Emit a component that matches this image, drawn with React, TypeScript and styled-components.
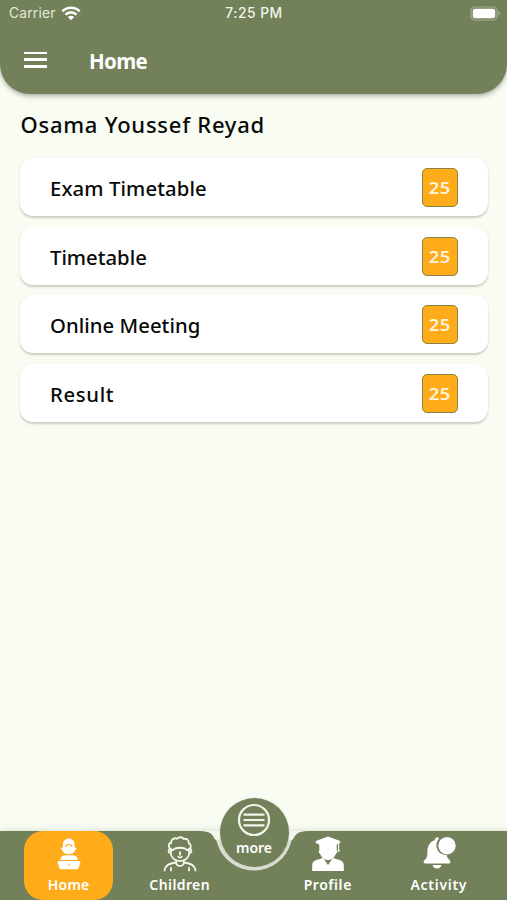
import React from "react";
import styled, { createGlobalStyle } from "styled-components";

const GREEN = "#728159";
const ORANGE = "#ffab1a";
const PAGE = "#f9fcf2";

const GlobalStyle = createGlobalStyle`
  * { box-sizing: border-box; }
  body { margin: 0; background: ${PAGE}; }
`;

const Screen = styled.div`
  width: 507px;
  height: 900px;
  display: flex;
  flex-direction: column;
  overflow: hidden;
  background: ${PAGE};
  font-family: "Noto Sans", "Open Sans", sans-serif;
`;

const Header = styled.header`
  height: 94px;
  flex: none;
  background: ${GREEN};
  border-radius: 0 0 30px 30px;
  box-shadow: 0 2px 5px rgba(60, 70, 50, 0.42);
  color: #fff;
`;

const StatusBar = styled.div`
  height: 27px;
  display: grid;
  grid-template-columns: 1fr auto 1fr;
  align-items: center;
  padding: 0 7px 0 9px;
  font: 400 13.8px/27px Inter, sans-serif;
  color: #f1f4ec;
`;

const Carrier = styled.div`
  display: flex;
  align-items: center;
  gap: 5px;
  letter-spacing: 0.2px;
  color: #e4e9dc;
`;

const Clock = styled.div`
  font-weight: 500;
  font-size: 13.8px;
  letter-spacing: 0.5px;
  margin-right: 1px;
`;

const BatteryBox = styled.div`
  display: flex;
  justify-content: flex-end;
`;

const TitleBar = styled.div`
  height: 65px;
  display: flex;
  align-items: center;
  padding: 0 0 0 24px;
  gap: 42px;
`;

const MenuButton = styled.button`
  width: 23px;
  height: 16px;
  padding: 0;
  border: 0;
  background: none;
  display: flex;
  flex-direction: column;
  justify-content: space-between;
`;

const MenuLine = styled.span`
  height: 2.5px;
  background: #fff;
`;

const Title = styled.h1<{ $tracking: number }>`
  margin: 2px 0 0;
  font-size: 20.5px;
  line-height: 28px;
  font-weight: 700;
  letter-spacing: ${(p) => p.$tracking}px;
`;

const Content = styled.main`
  flex: 1;
  padding: 15px 19px 0 20px;
  color: #080a08;
`;

const Name = styled.h2<{ $tracking: number }>`
  margin: 0 0 19px;
  padding-left: 0.5px;
  height: 30px;
  font-size: 22px;
  line-height: 30px;
  font-weight: 500;
  white-space: nowrap;
  letter-spacing: ${(p) => p.$tracking}px;
`;

const CardList = styled.div`
  display: flex;
  flex-direction: column;
  gap: 10.5px;
`;

const Card = styled.div`
  height: 58px;
  display: flex;
  align-items: center;
  justify-content: space-between;
  padding: 0 30px;
  background: #fff;
  border-radius: 13px;
  box-shadow: 0 1.5px 2px rgba(60, 70, 60, 0.25);
`;

const CardLabel = styled.span<{ $tracking: number }>`
  padding-top: 2px;
  font-size: 20.3px;
  line-height: 28px;
  font-weight: 500;
  white-space: nowrap;
  letter-spacing: ${(p) => p.$tracking}px;
`;

const Count = styled.span`
  width: 36px;
  height: 39px;
  margin-top: 1px;
  padding-top: 1px;
  display: flex;
  align-items: center;
  justify-content: center;
  background: ${ORANGE};
  border: 1.5px solid #858448;
  border-radius: 5px;
  color: #fff4dc;
`;

const Digits = styled.span`
  font-size: 16.5px;
  line-height: 22px;
  font-weight: 600;
  letter-spacing: 0.4px;
  margin-right: -0.4px;
  transform: scaleX(1.12);
`;

const NavBar = styled.nav`
  height: 69px;
  flex: none;
  display: grid;
  grid-template-columns: 24px 89px 22px 89px 59px 89px 22px 89px 24px;
  background: ${GREEN};
  box-shadow: 0 -1px 6px rgba(90, 100, 80, 0.18);
  position: relative;
`;

const NavItem = styled.button<{ $column: number; $active?: boolean }>`
  grid-column: ${(p) => p.$column};
  height: 69px;
  padding: 5px 0;
  border: 0;
  border-radius: 19px;
  background: ${(p) => (p.$active ? ORANGE : "transparent")};
  color: #fff;
  font-family: inherit;
  display: flex;
  flex-direction: column;
  align-items: center;
  justify-content: space-between;
`;

const NavLabel = styled.span<{ $tracking: number }>`
  font-size: 14px;
  line-height: 20px;
  font-weight: 600;
  white-space: nowrap;
  letter-spacing: ${(p) => p.$tracking}px;
  margin-right: ${(p) => -p.$tracking}px;
`;

const Notch = styled.svg`
  position: absolute;
  left: 200px;
  top: -1px;
`;

const MoreButton = styled.button`
  position: absolute;
  left: 219.5px;
  top: -33.5px;
  width: 69px;
  height: 69px;
  padding: 5px 0 0;
  border: 0;
  border-radius: 50%;
  background: ${GREEN};
  box-shadow: 0 0 2px rgba(60, 70, 45, 0.2);
  color: #fff;
  font-family: inherit;
  display: flex;
  flex-direction: column;
  align-items: center;
  gap: 1px;
`;

const WifiIcon = () => (
  <svg width="20" height="15" viewBox="0 0 18 14" fill="none" stroke="#fff" strokeWidth="2.4">
    <path d="M.9 5.1c4.6-4.6 11.6-4.6 16.2 0M3.8 8.1c3-2.9 7.4-2.9 10.4 0" />
    <path d="M6 10.3c1.8-1.6 4.2-1.6 6 0l-3 3.1z" fill="#fff" stroke="none" />
  </svg>
);

const BatteryIcon = () => (
  <svg width="30" height="15" viewBox="0 0 30 15">
    <rect x="1" y="1" width="26" height="13" rx="3.8" fill="none" stroke="#a3ad92" strokeWidth="1.2" />
    <rect x="2.8" y="2.8" width="22.4" height="9.4" rx="2" fill="#fff" />
    <path d="M28.4 5.3c2 .7 2 3.7 0 4.4z" fill="#a3ad92" />
  </svg>
);

const HomeIcon = () => (
  <svg width="34" height="35" viewBox="0 0 34 35" fill="#fff">
    <path d="M11 11V8.6c0-3.6 2.4-6.1 5.8-6.1s5.8 2.5 5.8 6.1V11l2 1.6-1.3 1.5c-.7 2.4-2.4 3.8-4.7 3.8h-3.7c-2.3 0-4-1.4-4.7-3.8l-1.3-1.5z" />
    <path d="M13.6 11c.5-1.8 1.7-2.8 3.2-2.8s2.7 1 3.2 2.8" fill="none" stroke={ORANGE} strokeWidth="1.1" />
    <path d="M12.7 19.3h8.6c2.6.5 4.2 1.8 4.4 4.7H8.3c.2-2.9 1.8-4.2 4.4-4.7z" />
    <path d="M7.3 25h19.4c1.5 0 1.9 1 1.5 2.2L26.5 32c-.3.8-.8 1.2-1.5 1.2H9c-.7 0-1.2-.4-1.5-1.2l-1.7-4.8c-.4-1.2 0-2.2 1.5-2.2z" />
    <path d="M15.8 28.5c.8.7 1.6.7 2.4 0" fill="none" stroke={ORANGE} strokeWidth="1" />
  </svg>
);

const ChildIcon = () => (
  <svg width="34" height="36" viewBox="0 0 34 36" fill="none" stroke="#f4f7ed" strokeWidth="1.8" strokeLinecap="round" strokeLinejoin="round">
    <path d="M7.5 13c-3-2.6-2-6 .8-6C7.5 3.5 11.5 1.3 14 2.8c2-2.2 5.5-2 6.5.2 3-1 6 1.3 5.2 4.3 2.8 1 2.6 4.3.6 5.7" />
    <path d="M7.5 14h2.8c1.7-3 11.7-3 13.4 0h2.8" />
    <path d="M7.5 13c-2.3-.3-2.7 3.8 0 4 .6 4.3 3.9 8.2 9.5 8.2s8.9-3.9 9.5-8.2c2.7-.2 2.3-4.3 0-4M8 13v4M26 13v4" />
    <path d="M17 16.2v2.5M15.3 20.8c.8 1 2.6 1 3.4 0" />
    <path d="M13.2 24.5v2.2c0 4.3 7.6 4.3 7.6 0v-2.2M12.7 26.5C7 27.5 2.5 28.5 1.5 34.5M21.3 26.5c5.7 1 10.2 2 11.2 8M8 31.8V34.5M26 31.8V34.5" />
  </svg>
);

const ProfileIcon = () => (
  <svg width="34" height="36" viewBox="0 0 34 36" fill="#fff">
    <path d="M17 .5 4.8 5v2l3.5 1.6v5.9c-1 .4-.8 2.6.6 3 1.3 3.8 4.4 6.5 8.1 6.5s6.8-2.7 8.1-6.5c1.4-.4 1.6-2.6.6-3V8.6L29.2 7V5z" />
    <path d="M27.6 7v6" stroke="#fff" strokeWidth="1.1" />
    <path d="m27.6 12-1.4 3.5H29z" />
    <path d="M12 21.8 17 29l5-7.2c3.5 2 10.8 1.8 10.8 7.2v6H1.2v-6c0-5.4 7.3-5.2 10.8-7.2z" />
  </svg>
);

const BellIcon = () => (
  <svg width="34" height="36" viewBox="0 0 34 36" fill="#fff">
    <path d="M14.5 1.7c1.3-.8 2.4-.4 2.2 1.4-4.2 4.6-3 14.4 6.2 15.9l1.8.1c.2 3.6 3.7 4.6 3.7 6.8 0 1.1-.9 1.7-2.1 1.7H3.5c-1.8 0-2.5-1.7-1.4-3 1.7-1.7 3.3-2.5 3.3-7.2C5 9.8 8 5.4 12.9 4.2c-.1-1.2.3-2 1.6-2.5z" />
    <path d="M10.5 29h8.9c-.8 4.8-8.1 4.8-8.9 0z" />
    <circle cx="25" cy="9.7" r="8.7" />
  </svg>
);

const MoreIcon = () => (
  <svg width="34" height="34" viewBox="0 0 34 34" fill="none" stroke="#f1f5e9" strokeWidth="2.2">
    <circle cx="17" cy="17" r="15" />
    <path d="M6.5 11.6h21M6.5 17h21M6.5 22.4h21" />
  </svg>
);

const items: [string, number][] = [
  ["Exam Timetable", 0.12],
  ["Timetable", 0],
  ["Online Meeting", 0.05],
  ["Result", 0.65],
];

export default function App() {
  return (
    <Screen>
      <GlobalStyle />
      <Header>
        <StatusBar>
          <Carrier>Carrier <WifiIcon /></Carrier>
          <Clock>7:25 PM</Clock>
          <BatteryBox><BatteryIcon /></BatteryBox>
        </StatusBar>
        <TitleBar>
          <MenuButton aria-label="Menu"><MenuLine /><MenuLine /><MenuLine /></MenuButton>
          <Title $tracking={-0.65}>Home</Title>
        </TitleBar>
      </Header>
      <Content>
        <Name $tracking={0.75}>Osama Youssef Reyad</Name>
        <CardList>
          {items.map(([label, tracking]) => (
            <Card key={label}>
              <CardLabel $tracking={tracking}>{label}</CardLabel>
              <Count><Digits>25</Digits></Count>
            </Card>
          ))}
        </CardList>
      </Content>
      <NavBar>
        <NavItem $column={2} $active><HomeIcon /><NavLabel $tracking={0.2}>Home</NavLabel></NavItem>
        <NavItem $column={4}><ChildIcon /><NavLabel $tracking={0.4}>Children</NavLabel></NavItem>
        <NavItem $column={6}><ProfileIcon /><NavLabel $tracking={0.55}>Profile</NavLabel></NavItem>
        <NavItem $column={8}><BellIcon /><NavLabel $tracking={0.7}>Activity</NavLabel></NavItem>
        <Notch width="108" height="42" viewBox="0 0 108 42">
          <path d="M0 1C10 1 14.5 4 16.8 12A38.5 38.5 0 0 0 91.2 12C93.5 4 98 1 108 1z" fill="#dadfd2" />
          <path d="M0 1c9 0 12.5 2.5 15 8.5l5 1h68l5-1c2.5-6 6-8.5 15-8.5z" fill="#f3f7ed" />
        </Notch>
        <MoreButton><MoreIcon /><NavLabel $tracking={-0.1}>more</NavLabel></MoreButton>
      </NavBar>
    </Screen>
  );
}
